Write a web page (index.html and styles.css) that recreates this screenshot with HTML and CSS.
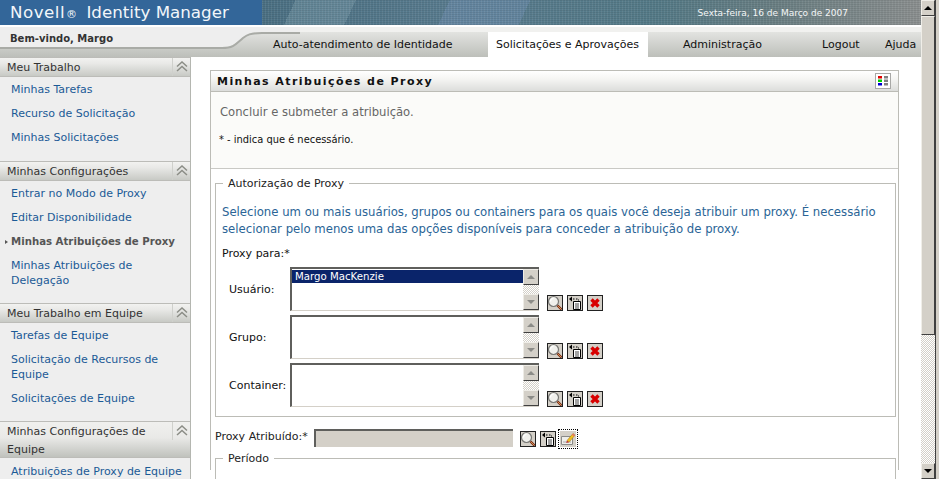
FILE: index.html
```html
<!DOCTYPE html>
<html lang="pt">
<head>
<meta charset="utf-8">
<title>Novell Identity Manager</title>
<link rel="stylesheet" href="styles.css">
</head>
<body>
<div class="page">
  <div class="main">
    <header class="banner">
      <div class="brand"><span class="brand-n">Novell</span><span class="reg">®</span> Identity Manager</div>
      <div class="art"><span class="date">Sexta-feira, 16 de Março de 2007</span></div>
    </header>
    <div class="topbar">
      <svg class="curve" width="300" height="30" viewBox="0 0 300 30" aria-hidden="true">
        <path d="M0 0H300V5H262C250 5 247 7 243 10C236 16 234 20 222 20H0Z" fill="#eeeeee"/>
        <path d="M0 21H222C234 21 236 17 243 11C247 8 250 6 262 6H300" fill="none" stroke="#a9aba6" stroke-width="2"/>
      </svg>
      <div class="welcome">Bem-vindo, Margo</div>
      <nav class="tabs">
        <a class="tab tab-auto">Auto-atendimento de Identidade</a>
        <a class="tab tab-on">Solicitações e Aprovações</a>
        <a class="tab tab-admin">Administração</a>
        <a class="tab tab-logout">Logout</a>
        <a class="tab tab-help">Ajuda</a>
      </nav>
    </div>
    <div class="body">
      <aside class="side">
        <section class="group">
          <h3 class="ghead"><span class="gtitle">Meu Trabalho</span><span class="gbtn"><svg width="12" height="11" viewBox="0 0 12 11"><path d="M1 5.500 6 1l5 4.500M1 10l5-4.500 5 4.500" fill="none" stroke="#8b8d86" stroke-width="1.500"/></svg></span></h3>
          <ul class="glist glist-a">
            <li>Minhas Tarefas</li>
            <li>Recurso de Solicitação</li>
            <li>Minhas Solicitações</li>
          </ul>
        </section>
        <section class="group">
          <h3 class="ghead"><span class="gtitle">Minhas Configurações</span><span class="gbtn"><svg width="12" height="11" viewBox="0 0 12 11"><path d="M1 5.500 6 1l5 4.500M1 10l5-4.500 5 4.500" fill="none" stroke="#8b8d86" stroke-width="1.500"/></svg></span></h3>
          <ul class="glist glist-b">
            <li>Entrar no Modo de Proxy</li>
            <li>Editar Disponibilidade</li>
            <li class="current">Minhas Atribuições de Proxy</li>
            <li>Minhas Atribuições de Delegação</li>
          </ul>
        </section>
        <section class="group">
          <h3 class="ghead"><span class="gtitle">Meu Trabalho em Equipe</span><span class="gbtn"><svg width="12" height="11" viewBox="0 0 12 11"><path d="M1 5.500 6 1l5 4.500M1 10l5-4.500 5 4.500" fill="none" stroke="#8b8d86" stroke-width="1.500"/></svg></span></h3>
          <ul class="glist glist-c">
            <li>Tarefas de Equipe</li>
            <li>Solicitação de Recursos de Equipe</li>
            <li>Solicitações de Equipe</li>
          </ul>
        </section>
        <section class="group">
          <h3 class="ghead ghead-tall"><span class="gtitle">Minhas Configurações de Equipe</span><span class="gbtn"><svg width="12" height="11" viewBox="0 0 12 11"><path d="M1 5.500 6 1l5 4.500M1 10l5-4.500 5 4.500" fill="none" stroke="#8b8d86" stroke-width="1.500"/></svg></span></h3>
          <ul class="glist glist-d">
            <li>Atribuições de Proxy de Equipe</li>
          </ul>
        </section>
      </aside>
      <main class="content">
        <div class="panel">
          <div class="ptitle">
            <h1 class="pheading">Minhas Atribuições de Proxy</h1>
            <span class="pmenu"><svg width="12" height="12" viewBox="0 0 12 12"><path fill="#e00000" d="M1 1h4v2.500H1z"/><path fill="#00d000" d="M1 4.500h4V7H1z"/><path fill="#0000d0" d="M1 8h4v2.500H1z"/><path fill="#808080" d="M7 1h4v2.500H7zM7 4.500h4V7H7zM7 8h4v2.500H7z"/></svg></span>
          </div>
          <div class="pintro">
            <p class="lead">Concluir e submeter a atribuição.</p>
            <p class="req">* - indica que é necessário.</p>
          </div>
          <div class="pbody">
            <fieldset class="fs">
              <legend class="lg">Autorização de Proxy</legend>
              <p class="hint">Selecione um ou mais usuários, grupos ou containers para os quais você deseja atribuir um proxy. É necessário selecionar pelo menos uma das opções disponíveis para conceder a atribuição de proxy.</p>
              <div class="plabel">Proxy para:*</div>
              <div class="prow">
                <span class="rlabel">Usuário:</span>
                <div class="lbox">
                  <div class="litems"><div class="lsel">Margo MacKenzie</div></div>
                  <div class="lscroll"><span class="sbtn"><i class="up"></i></span><span class="strack"></span><span class="sbtn"><i class="down"></i></span></div>
                </div>
                <div class="icons">
                  <span class="ib"><svg width="16" height="16" viewBox="0 0 16 16"><use href="#i-find"/></svg></span>
                  <span class="ib"><svg width="16" height="16" viewBox="0 0 16 16"><use href="#i-hist"/></svg></span>
                  <span class="ib"><svg width="16" height="16" viewBox="0 0 16 16"><use href="#i-del"/></svg></span>
                </div>
              </div>
              <div class="prow">
                <span class="rlabel">Grupo:</span>
                <div class="lbox">
                  <div class="litems"></div>
                  <div class="lscroll"><span class="sbtn"><i class="up"></i></span><span class="strack"></span><span class="sbtn"><i class="down"></i></span></div>
                </div>
                <div class="icons">
                  <span class="ib"><svg width="16" height="16" viewBox="0 0 16 16"><use href="#i-find"/></svg></span>
                  <span class="ib"><svg width="16" height="16" viewBox="0 0 16 16"><use href="#i-hist"/></svg></span>
                  <span class="ib"><svg width="16" height="16" viewBox="0 0 16 16"><use href="#i-del"/></svg></span>
                </div>
              </div>
              <div class="prow">
                <span class="rlabel">Container:</span>
                <div class="lbox">
                  <div class="litems"></div>
                  <div class="lscroll"><span class="sbtn"><i class="up"></i></span><span class="strack"></span><span class="sbtn"><i class="down"></i></span></div>
                </div>
                <div class="icons">
                  <span class="ib"><svg width="16" height="16" viewBox="0 0 16 16"><use href="#i-find"/></svg></span>
                  <span class="ib"><svg width="16" height="16" viewBox="0 0 16 16"><use href="#i-hist"/></svg></span>
                  <span class="ib"><svg width="16" height="16" viewBox="0 0 16 16"><use href="#i-del"/></svg></span>
                </div>
              </div>
            </fieldset>
            <div class="assign">
              <span class="alabel">Proxy Atribuído:*</span>
              <span class="ainput"></span>
              <div class="icons icons-a">
                <span class="ib"><svg width="16" height="16" viewBox="0 0 16 16"><use href="#i-find"/></svg></span>
                <span class="ib"><svg width="16" height="16" viewBox="0 0 16 16"><use href="#i-hist"/></svg></span>
                <span class="ib ib-focus"><svg width="16" height="16" viewBox="0 0 16 16"><use href="#i-edit"/></svg></span>
              </div>
            </div>
            <fieldset class="fs fs-period">
              <legend class="lg">Período</legend>
            </fieldset>
          </div>
        </div>
      </main>
    </div>
  </div>
  <div class="vscroll">
    <span class="vbtn"><i class="up up-dark"></i></span>
    <span class="vthumb"></span>
    <span class="vtrack"></span>
    <span class="vbtn"><i class="down down-dark"></i></span>
  </div>
</div>
<svg class="defs" width="0" height="0" aria-hidden="true">
  <defs>
    <g id="i-find">
      <circle cx="6.500" cy="6.500" r="5" fill="#f0f0ec" stroke="#777774" stroke-width="1.200"/>
      <path d="M3.500 6.500a3 3 0 0 1 3-3" fill="none" stroke="#fff" stroke-width="1.200"/>
      <path d="M10.500 10.500l4 4" stroke="#7a2a10" stroke-width="2.400"/>
      <path d="M11 11l3 3" stroke="#e8a868" stroke-width="0.800"/>
    </g>
    <g id="i-hist">
      <path d="M6.500 6.500h7v8h-7z" fill="#fff" stroke="#000" stroke-width="1"/>
      <path d="M8 9h4M8 11h4M8 13h4" stroke="#444" stroke-width="1"/>
      <path d="M2 4l3-2.500v5z" fill="#000"/>
      <path d="M6 4h1.500M9 4h1.500" stroke="#000" stroke-width="1"/>
      <path d="M11.500 4.500v1" stroke="#000" stroke-width="1"/>
    </g>
    <g id="i-del">
      <path d="M4.500 4.500l7 7M11.500 4.500l-7 7" stroke="#d80000" stroke-width="3.400"/>
    </g>
    <g id="i-edit">
      <path d="M1.500 5.500h11v8h-11z" fill="#eeeeea" stroke="#8a8a88" stroke-width="1"/>
      <path d="M3 11h8" stroke="#aaa" stroke-width="1"/>
      <path d="M7 9.500l6-7 2 1.700-6 7z" fill="#f0c020" stroke="#a07010" stroke-width="0.500"/>
      <path d="M13 2.500l2 1.700-1 1.200-2-1.700z" fill="#e87070"/>
      <path d="M7 9.500l-0.800 2.500 2.800-0.800z" fill="#c03030"/>
    </g>
  </defs>
</svg>
</body>
</html>
```
FILE: styles.css
```css
* { box-sizing: border-box; }
html, body { margin: 0; padding: 0; height: 100%; overflow: hidden; background: #fff; }
body { font: 11px/15px "DejaVu Sans", sans-serif; color: #000; }
ul, p, h1, h3 { margin: 0; padding: 0; }
.page { display: flex; width: 939px; height: 479px; overflow: hidden; }
.main { width: 921px; flex: none; display: flex; flex-direction: column; min-height: 0; }

.banner { display: flex; height: 25px; flex: none; }
.brand { width: 262px; background: #336699; color: #f2f6fa; font-size: 16.700px; line-height: 25px; padding-left: 10px; white-space: nowrap; }
.brand-n { letter-spacing: 0.500px; }
.reg { font-size: 11px; margin: 0 4px 0 1px; }
.art { flex: 1; display: flex; justify-content: flex-end; align-items: center; padding-right: 73px;
  background:
    repeating-linear-gradient(0deg, rgba(0,0,0,.08) 0 1px, transparent 1px 2px),
    repeating-linear-gradient(90deg, rgba(255,255,255,.07) 0 1px, transparent 1px 3px),
    linear-gradient(115deg, transparent 0 5%, rgba(160,190,200,.25) 5% 14%, transparent 14% 28%, rgba(120,150,190,.35) 28% 40%, transparent 40%),
    linear-gradient(90deg, #4c7184 0, #5a7d90 30%, #557b88 60%, #6b8084 78%, #8c9090 100%); }
.date { color: #f4f6f6; font-size: 9px; line-height: 12px; white-space: nowrap; }

.topbar { position: relative; display: flex; height: 30px; flex: none; margin-top: 2px; background: linear-gradient(#f1f1ef 0 5px, #e2e3e0 5px, #bdbfba 100%); }
.curve { position: absolute; left: 0; top: 0; }
.welcome { position: relative; width: 273px; flex: none; padding: 4px 0 0 10px; font-weight: bold; color: #333; font-size: 10px; line-height: 15px; }
.tabs { position: relative; display: flex; align-items: stretch; height: 25px; margin-top: 5px; flex: 1; color: #111; }
.tab { display: block; line-height: 26px; white-space: nowrap; }
.tab-auto { width: 215px; }
.tab-on { width: 160px; padding-left: 8px; background: #fff; }
.tab-admin { width: 174px; padding-left: 35px; }
.tab-logout { width: 63px; }
.tab-help { width: 36px; }

.body { flex: 1; display: flex; min-height: 0; overflow: hidden; }
.side { width: 191px; flex: none; background: #eeeeee; border-right: 1px solid #b4b6b0; overflow: hidden; }
.ghead { display: flex; font-size: 11px; font-weight: normal; color: #333; height: 20px; background: linear-gradient(#f2f2f0, #e9e9e7 30%, #c8cac5 100%); border-top: 1px solid #bcbcb8; border-bottom: 1px solid #bcbcb8; }
.ghead-tall { height: 37px; background: linear-gradient(#f0f0ee, #e9e9e7 45%, #c0c2bd 100%); }
.gtitle { flex: 1; padding: 1px 4px 0 7px; line-height: 18px; }
.gbtn { width: 18px; height: 18px; flex: none; border-left: 1px solid #cfd0cc; display: flex; justify-content: center; padding-top: 3px; }
.gbtn svg { display: block; }
.glist { list-style: none; padding: 5px 2px 7px 11px; color: #1b5a96; }
.glist-a { padding-bottom: 7px; }
.glist-b { padding-bottom: 6px; }
.glist-c { padding-bottom: 6px; }
.glist-d { padding-top: 6px; }
.glist li { margin-bottom: 9px; position: relative; }
.glist .current { font-weight: bold; color: #555; font-size: 10.200px; white-space: nowrap; }
.current::before { content: ""; position: absolute; left: -6px; top: 6px; border-left: 3px solid #555; border-top: 2px solid transparent; border-bottom: 2px solid transparent; }

.content { flex: 1; padding: 13px 22px 0 19px; min-width: 0; }
.panel { border: 1px solid #bcbcb6; border-bottom: 0; height: 400px; background: #fff; }
.ptitle { display: flex; justify-content: space-between; align-items: center; height: 21px; padding: 0 7px 0 6px; border-bottom: 1px solid #bcbcb6; background: linear-gradient(#fff, #f5f5f3 40%, #dcdddb); }
.pheading { font-size: 11px; font-weight: bold; letter-spacing: 1.450px; color: #111; white-space: nowrap; }
.pmenu { width: 16px; height: 16px; border: 1px solid #a8a8a6; background: #fff; padding: 1px; display: block; }
.pmenu svg { display: block; }
.pintro { height: 77px; background: #fbfbf9; border-bottom: 1px solid #c9c9c5; padding: 13px 9px 0; }
.lead { color: #666; font-size: 11.600px; line-height: 15px; }
.req { font-size: 9.900px; line-height: 13px; color: #111; margin-top: 13px; margin-left: -1px; }
.pbody { padding: 7px 2px 0 4px; }
.fs { border: 1px solid #bcbcb6; margin: 0; padding: 0 6px; height: 241px; min-width: 0; }
.lg { margin-left: 1px; padding: 0 5px; line-height: 15px; color: #222; }
.hint { color: #2a6496; font-size: 11.700px; line-height: 16.500px; margin-top: 13px; }
.plabel { margin-top: 9px; line-height: 15px; color: #111; }
.prow { display: flex; align-items: flex-start; height: 44px; margin-top: 4px; }
.plabel + .prow { margin-top: 6px; }
.rlabel { width: 68px; flex: none; padding: 15px 0 0 7px; color: #111; }
.lbox { width: 249px; height: 44px; flex: none; display: flex; border-style: solid; border-width: 2px 0 0 2px; border-color: #5f5f5c; background: #fff; border-bottom: 1px solid #d4d0c8; }
.litems { flex: 1; padding-top: 1px; }
.lsel { background: #0a246a; color: #fff; height: 13px; line-height: 13px; padding-left: 3px; font-size: 10.200px; }
.lscroll { width: 16px; flex: none; display: flex; flex-direction: column; }
.sbtn { height: 16px; flex: none; display: flex; align-items: center; justify-content: center; background: #d4d0c8; border-style: solid; border-width: 1px; border-color: #eeece6 #404040 #404040 #eeece6; }
.strack { flex: 1; background: repeating-conic-gradient(#d4d0c8 0 25%, #fff 0 50%) 0 0/2px 2px; }
.up, .down { display: block; width: 0; height: 0; border-left: 4px solid transparent; border-right: 4px solid transparent; }
.up { border-bottom: 4px solid #8b8b87; }
.down { border-top: 4px solid #8b8b87; }
.up-dark { border-bottom-color: #000; }
.down-dark { border-top-color: #000; }
.icons { display: flex; gap: 4px; margin-left: 8px; padding-top: 28px; }
.ib { width: 16px; height: 16px; flex: none; display: block; background: #d4d0c8; outline: 1px solid #222; outline-offset: -1px; }
.ib svg { display: block; }
.assign { display: flex; align-items: flex-start; margin-top: 12px; height: 18px; }
.alabel { width: 99px; flex: none; line-height: 16px; color: #222; white-space: nowrap; }
.ainput { width: 199px; height: 18px; flex: none; background: #d4d0c8; border-style: solid; border-width: 2px 0 0 2px; border-color: #5f5f5c; }
.icons-a { margin-left: 7px; padding-top: 2px; }
.ib-focus { outline: 1px dotted #000; outline-offset: 1px; }
.fs-period { margin-top: 4px; height: 60px; }
.defs { position: absolute; }

.vscroll { width: 18px; flex: none; display: flex; flex-direction: column; border-right: 3px solid #d4d0c8; box-shadow: inset -1px 0 0 #404040; padding-right: 1px; }
.vbtn { height: 16px; flex: none; display: flex; align-items: center; justify-content: center; background: #d4d0c8; border-style: solid; border-width: 1px; border-color: #f0eee8 #404040 #404040 #f0eee8; }
.vthumb { height: 319px; flex: none; background: #d4d0c8; border-style: solid; border-width: 1px; border-color: #f0eee8 #404040 #404040 #f0eee8; }
.vtrack { flex: 1; background: repeating-conic-gradient(#d4d0c8 0 25%, #fff 0 50%) 0 0/2px 2px; }
```
